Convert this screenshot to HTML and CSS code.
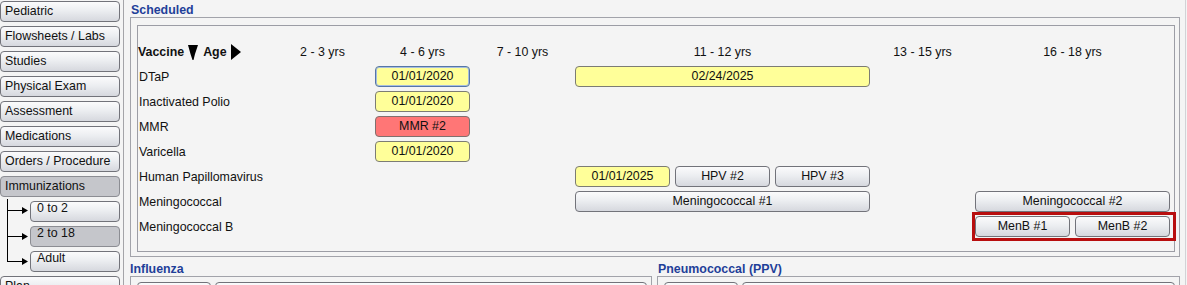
FILE: index.html
```html
<!DOCTYPE html>
<html lang="en">
<head>
  <meta charset="UTF-8">
  <title>Immunizations - 2 to 18</title>
  <link rel="stylesheet" href="styles.css">
</head>
<body>
  <div class="app">
    <div class="sidebar">
      <div class="nav-btn">Pediatric</div>
      <div class="nav-btn">Flowsheets / Labs</div>
      <div class="nav-btn">Studies</div>
      <div class="nav-btn">Physical Exam</div>
      <div class="nav-btn">Assessment</div>
      <div class="nav-btn">Medications</div>
      <div class="nav-btn">Orders / Procedure</div>
      <div class="nav-btn selected">Immunizations</div>
      <div class="subtree">
        <svg class="tree" width="30" height="71" viewBox="0 0 30 71">
          <line x1="7.5" y1="-2" x2="7.5" y2="61" stroke="#000"/>
          <line x1="7" y1="9.5" x2="23" y2="9.5" stroke="#000"/>
          <line x1="7" y1="35.5" x2="23" y2="35.5" stroke="#000"/>
          <line x1="7" y1="60.5" x2="23" y2="60.5" stroke="#000"/>
          <polygon points="22,6 28,9.5 22,13" fill="#000"/>
          <polygon points="22,32 28,35.5 22,39" fill="#000"/>
          <polygon points="22,57 28,60.5 22,64" fill="#000"/>
        </svg>
        <div class="sub-list">
          <div class="sub-btn">0 to 2</div>
          <div class="sub-btn selected">2 to 18</div>
          <div class="sub-btn">Adult</div>
        </div>
      </div>
      <div class="nav-btn">Plan</div>
    </div>

    <div class="main">
      <div class="group-title">Scheduled</div>
      <div class="group">
        <div class="inner">
          <div class="schedule">
            <div class="head-label">
              <b>Vaccine</b>
              <svg class="sort-down" width="10" height="15" viewBox="0 0 10 15"><polygon points="0,0 10,0 7,9 5.5,15 4.5,15 2.5,9" fill="#000"/></svg>
              <b>Age</b>
              <svg class="sort-right" width="10" height="16" viewBox="0 0 10 16"><polygon points="0,0 10,8 0,16" fill="#000"/></svg>
            </div>
            <div class="age c2">2 - 3 yrs</div>
            <div class="age c3">4 - 6 yrs</div>
            <div class="age c4">7 - 10 yrs</div>
            <div class="age c5 span3">11 - 12 yrs</div>
            <div class="age c8">13 - 15 yrs</div>
            <div class="age c9 span2">16 - 18 yrs</div>

            <div class="label">DTaP</div>
            <div class="dose given focused c3">01/01/2020</div>
            <div class="dose given c5 span3">02/24/2025</div>

            <div class="label">Inactivated Polio</div>
            <div class="dose given c3">01/01/2020</div>

            <div class="label">MMR</div>
            <div class="dose overdue c3">MMR #2</div>

            <div class="label">Varicella</div>
            <div class="dose given c3">01/01/2020</div>

            <div class="label">Human Papillomavirus</div>
            <div class="dose given c5">01/01/2025</div>
            <div class="dose c6">HPV #2</div>
            <div class="dose c7">HPV #3</div>

            <div class="label">Meningococcal</div>
            <div class="dose c5 span3">Meningococcal #1</div>
            <div class="dose c9 span2">Meningococcal #2</div>

            <div class="label">Meningococcal B</div>
            <div class="highlight c9 span2">
              <div class="dose">MenB #1</div>
              <div class="dose">MenB #2</div>
            </div>
          </div>
        </div>
      </div>

      <div class="lower">
        <div class="lower-col">
          <div class="group-title">Influenza</div>
          <div class="small-group">
            <div class="stub short"></div>
            <div class="stub wide"></div>
          </div>
        </div>
        <div class="lower-col">
          <div class="group-title indent">Pneumococcal (PPV)</div>
          <div class="small-group">
            <div class="stub short"></div>
            <div class="stub wide"></div>
          </div>
        </div>
      </div>
    </div>
  </div>
</body>
</html>
```

FILE: styles.css
```css
body {
  margin: 0;
  background: #f4f4f4;
  color: #111;
  font-family: "Liberation Sans", Arial, sans-serif;
  font-size: 12.4px;
  overflow: hidden;
}
.app {
  display: flex;
  width: 1186px;
  height: 285px;
}
.sidebar {
  width: 124px;
  border-right: 1px solid #a4a4a8;
  display: flex;
  flex-direction: column;
  gap: 4px;
  padding-top: 1px;
  box-sizing: border-box;
  flex-shrink: 0;
}
.nav-btn, .sub-btn, .dose, .stub {
  box-sizing: border-box;
  height: 21px;
  border: 1px solid #72737a;
  border-radius: 4px;
  background: linear-gradient(#fbfbfc, #eceef1 45%, #d6d8de);
}
.nav-btn {
  width: 120px;
  line-height: 19px;
  padding-left: 4px;
  flex-shrink: 0;
}
.nav-btn.selected, .sub-btn.selected {
  background: #c5c6cb;
  border-color: #8c8d93;
}
.subtree {
  display: flex;
  flex-shrink: 0;
}
.tree {
  overflow: visible;
  flex-shrink: 0;
}
.sub-list {
  display: flex;
  flex-direction: column;
  gap: 4px;
}
.sub-btn {
  width: 90px;
  line-height: 13px;
  padding-left: 6px;
}
.main {
  flex: 1;
  padding-left: 6px;
  border-right: 1px solid #d2d2d6;
}
.group-title {
  color: #1f3f99;
  font-weight: bold;
  line-height: 14px;
  padding-top: 3px;
  padding-left: 1px;
}
.group {
  width: 1050px;
  box-sizing: border-box;
  border: 1px solid #a2a3aa;
  padding: 7px 4px 4px 6px;
}
.inner {
  border: 1px solid #9c9da5;
  padding: 15px 4px 14px 0;
}
.schedule {
  display: grid;
  grid-template-columns: 132px repeat(9, 95px);
  grid-auto-rows: 21px;
  column-gap: 5px;
  row-gap: 4px;
  align-items: center;
}
.head-label {
  grid-column: 1;
  display: flex;
  align-items: center;
  gap: 4px;
  padding-top: 1px;
}
.head-label b {
  font-weight: bold;
}
.sort-down {
  margin-right: 1px;
}
.age {
  text-align: center;
}
.label {
  grid-column: 1;
  padding-left: 1px;
}
.c2 { grid-column: 2; }
.c3 { grid-column: 3; }
.c4 { grid-column: 4; }
.c5 { grid-column: 5; }
.c6 { grid-column: 6; }
.c7 { grid-column: 7; }
.c8 { grid-column: 8; }
.c9 { grid-column: 9; }
.span2 { grid-column-end: span 2; }
.span3 { grid-column-end: span 3; }
.dose {
  text-align: center;
  line-height: 19px;
}
.dose.given {
  background: #ffff99;
  border-color: #7c7c74;
}
.dose.overdue {
  background: #ff7676;
  border-color: #80706e;
}
.dose.focused {
  border-color: #5576a8;
  box-shadow: inset 0 0 0 1px #a7bedf;
}
.highlight {
  display: flex;
  gap: 5px;
  align-self: stretch;
  margin: -4px -6px -4px -3px;
  border: 3px solid #b80e0e;
  padding: 1px 3px 1px 0;
}
.highlight .dose {
  width: 95px;
}
.lower {
  display: flex;
  gap: 5px;
}
.lower-col:first-child {
  width: 522px;
}
.lower-col:last-child {
  width: 523px;
}
.lower .group-title {
  padding-top: 5px;
  padding-left: 0;
}
.lower .group-title.indent {
  padding-left: 1px;
}
.small-group {
  border: 1px solid #a2a3aa;
  padding: 5px 4px 0 6px;
  display: flex;
  gap: 4px;
  height: 40px;
}
.stub.short {
  width: 74px;
}
.stub.wide {
  flex: 1;
}
```
